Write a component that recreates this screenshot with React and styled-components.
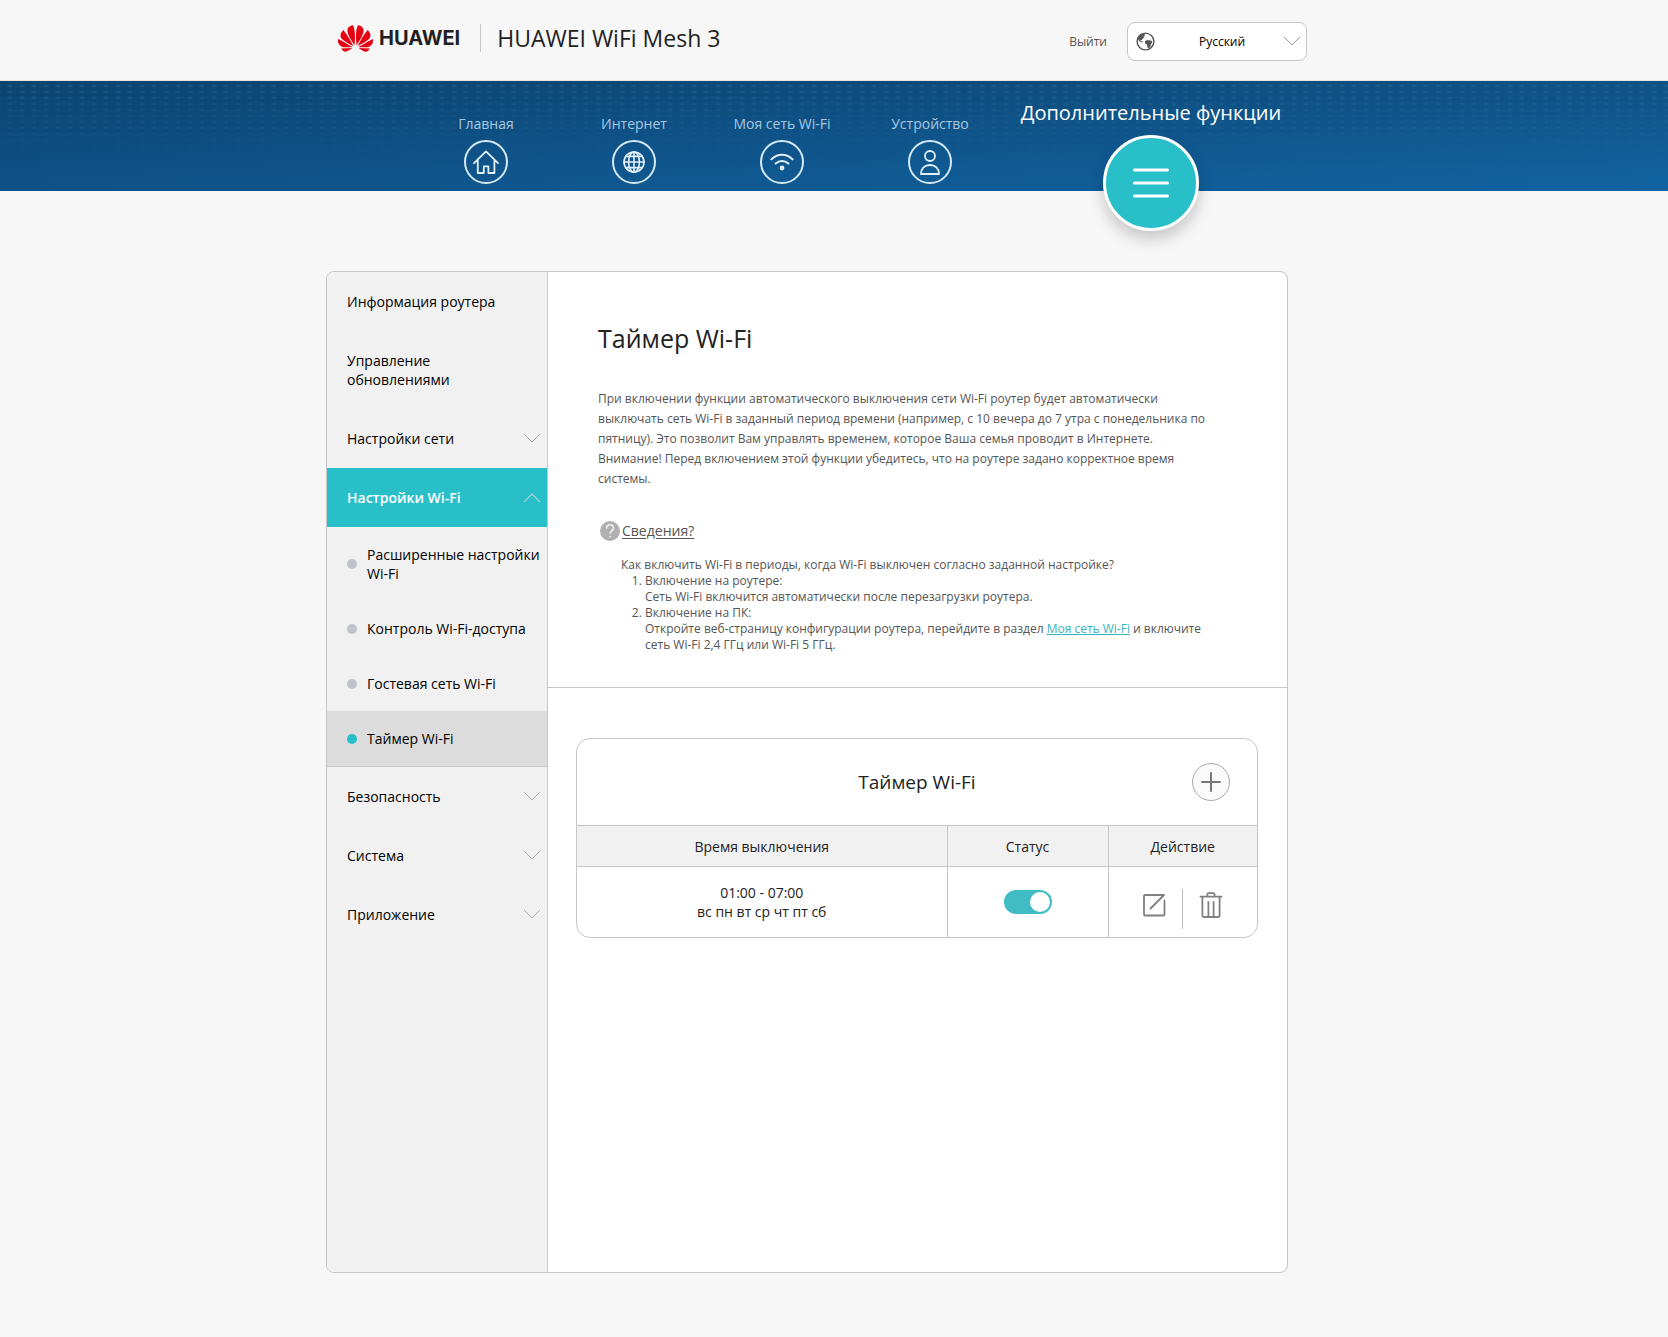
import React, { useState } from "react";
import styled, { createGlobalStyle, css } from "styled-components";
import { SiHuawei } from "react-icons/si";

const teal = "#29bfc8";
const line = "#c6c6c6";

const GlobalStyle = createGlobalStyle`
  *, *::before, *::after { box-sizing: border-box; }
  body {
    margin: 0;
    background: #f7f7f7;
    color: #222;
    font: 14px/19px "Open Sans", "Noto Sans", sans-serif;
  }
  button, select { font: inherit; color: inherit; }
  a { color: inherit; text-decoration: none; }
`;

const Page = styled.div`
  display: flex;
  flex-direction: column;
  min-height: 100vh;
`;

const Wrap = styled.div`
  width: 100%;
  max-width: 1016px;
  margin: 0 auto;
`;

/* Header */
const Header = styled.header`
  border-bottom: 1px solid #e3e3e3;
`;

const HeaderRow = styled(Wrap)`
  display: flex;
  align-items: center;
  height: 80px;
  padding: 0 35px 4px 12px;
`;

const Brand = styled.a`
  display: flex;
  align-items: center;
  gap: 6px;
  height: 28px;
  padding-right: 20px;
  border-right: 1px solid ${line};
  color: #231f20;
  font: 700 20px/28px Inter, sans-serif;

  svg { color: #e60012; }
`;

const Product = styled.span`
  flex: 1;
  padding-left: 16px;
  font-size: 23px;
  line-height: 32px;
`;

const Tools = styled.div`
  display: flex;
  align-items: center;
  gap: 20px;
  padding-top: 6px;
`;

const Logout = styled.a`
  color: #555;
  font-size: 12px;
`;

const Language = styled.label`
  position: relative;
  width: 180px;
  color: #555;

  svg { position: absolute; top: 10px; left: 9px; pointer-events: none; }
  svg + svg { top: 15px; left: auto; right: 7px; color: #999; }
`;

const LanguageSelect = styled.select`
  display: block;
  width: 100%;
  height: 39px;
  padding: 0 18px 0 28px;
  border: 1px solid ${line};
  border-radius: 8px;
  background: #fff;
  color: #000;
  font-size: 12px;
  text-align: center;
  text-align-last: center;
  appearance: none;
`;

/* Main navigation */
const Banner = styled.nav`
  position: relative;
  height: 110px;
  background:
    linear-gradient(to bottom, rgba(0, 0, 0, 0.17), rgba(0, 0, 0, 0) 90%),
    linear-gradient(to right, #0e5186, #1162a0);

  &::before {
    content: "";
    position: absolute;
    inset: 2px 0 30px;
    background: radial-gradient(ellipse 4px 2px, rgba(120, 180, 200, 0.18), transparent) 4px 0 / 12px 6px;
    mask-image: linear-gradient(to bottom, #000, transparent);
  }
`;

const NavRow = styled(Wrap)`
  position: relative;
  display: flex;
  align-items: flex-start;
  padding: 0 44px 0 86px;
`;

const NavItem = styled.a`
  display: flex;
  flex-direction: column;
  align-items: center;
  gap: 6px;
  width: 148px;
  padding-top: 33px;
  color: #a6c8e0;
  line-height: 20px;

  ${(p) => p.$active && css`
    flex: 1;
    gap: 8px;
    padding-top: 18px;
    color: #fff;
    font-size: 20px;
    font-weight: 500;
    line-height: 28px;
  `}
`;

const NavCircle = styled.span`
  display: flex;
  align-items: center;
  justify-content: center;
  width: 44px;
  height: 44px;
  border: 2px solid #d5e9f6;
  border-radius: 50%;
  color: #e2f1fb;

  ${(p) => p.$active && css`
    width: 96px;
    height: 96px;
    border: 3px solid #fff;
    background: ${teal};
    color: #fff;
    box-shadow: 0 8px 16px rgba(0, 0, 0, 0.2);
  `}
`;

/* Body */
const Main = styled(Wrap)`
  flex: 1;
  display: flex;
  padding: 80px 54px 64px 0;
`;

const Panel = styled.div`
  flex: 1;
  display: flex;
  border: 1px solid ${line};
  border-radius: 8px;
  background: #fff;
  overflow: hidden;
`;

const Sidebar = styled.aside`
  flex: none;
  width: 221px;
  border-right: 1px solid ${line};
  background: #f1f1f1;
  color: #000;
`;

const MenuItem = styled.a`
  display: flex;
  align-items: center;
  justify-content: space-between;
  padding: 20px 7px 20px 20px;

  svg { flex: none; color: #aaa; }

  ${(p) => p.$open && css`
    background: ${teal};
    color: #fff;
    font-weight: 600;
    svg { color: #fff; transform: rotate(180deg); }
  `}
`;

const MenuText = styled.span`
  max-width: 160px;
`;

const SubMenu = styled.div`
  border-bottom: 1px solid ${line};
`;

const SubItem = styled.a`
  display: flex;
  align-items: center;
  gap: 10px;
  padding: 18px 4px 18px 20px;
  background: ${(p) => (p.$active ? "#dcdcdc" : "transparent")};

  &::before {
    content: "";
    flex: none;
    width: 10px;
    height: 10px;
    border-radius: 50%;
    background: ${(p) => (p.$active ? teal : "#bfc3cb")};
  }
`;

const Content = styled.main`
  flex: 1;
  min-width: 0;
`;

const Intro = styled.section`
  padding: 48px 72px 34px 50px;
  border-bottom: 1px solid ${line};
  color: #555;
  font-size: 12px;
`;

const Title = styled.h1`
  margin: 0;
  color: #222;
  font-size: 25px;
  font-weight: 400;
  line-height: 36px;
`;

const Lead = styled.p`
  margin: 33px 0 32px;
  line-height: 20px;
`;

const HelpButton = styled.button`
  display: flex;
  align-items: center;
  gap: 2px;
  margin: 0 0 16px;
  padding: 0 2px;
  border: 0;
  background: none;
  font-size: 14px;
  line-height: 20px;
  text-decoration: underline;
  text-underline-offset: 2px;
`;

const HelpText = styled.div`
  padding-left: 23px;
  line-height: 16px;

  ol { margin: 0; padding-left: 24px; }
  a { color: #38b4bc; text-decoration: underline; }
`;

const Card = styled.section`
  margin: 50px 29px 50px 28px;
  border: 1px solid ${line};
  border-radius: 14px;
  overflow: hidden;
`;

const CardHead = styled.div`
  display: grid;
  grid-template-columns: 38px 1fr 38px;
  align-items: center;
  height: 86px;
  padding: 0 27px;
`;

const CardTitle = styled.h2`
  grid-column: 2;
  margin: 0;
  font-size: 19px;
  font-weight: 400;
  line-height: 28px;
  text-align: center;
`;

const AddButton = styled.button`
  display: flex;
  align-items: center;
  justify-content: center;
  width: 38px;
  height: 38px;
  padding: 0;
  border: 1px solid #aaa;
  border-radius: 50%;
  background: #fafafa;
  color: #777;
`;

const Table = styled.table`
  width: 100%;
  border-collapse: collapse;
  table-layout: fixed;
  text-align: center;

  th, td { padding: 0; }
  th + th, td + td { border-left: 1px solid ${line}; }
  th {
    height: 41px;
    border-top: 1px solid ${line};
    border-bottom: 1px solid ${line};
    background: #f1f1f1;
    font-weight: 400;
  }
  td { height: 70px; }
  th:nth-child(2) { width: 161px; }
  th:nth-child(3) { width: 149px; }
`;

const Switch = styled.input`
  display: block;
  width: 48px;
  height: 24px;
  margin: 0 auto;
  padding: 2px;
  border-radius: 12px;
  background: #bfc3cb;
  appearance: none;

  &::before {
    content: "";
    display: block;
    width: 20px;
    height: 20px;
    border-radius: 50%;
    background: #fff;
  }
  &:checked { background: #41bcc4; }
  &:checked::before { margin-left: auto; }
`;

const Actions = styled.div`
  display: flex;
  justify-content: center;
  padding-top: 14px;
`;

const ActionButton = styled.button`
  display: flex;
  align-items: center;
  justify-content: center;
  width: 56px;
  height: 32px;
  padding: 0;
  border: 0;
  background: none;
  color: #808080;
`;

const ActionRule = styled.span`
  width: 1px;
  height: 40px;
  background: #bbb;
`;

/* Icons */
const Icon = ({ w, h = w, box = `0 0 ${w} ${h}`, sw = 2, children }) => (
  <svg width={w} height={h} viewBox={box} fill="none" stroke="currentColor" strokeWidth={sw} strokeLinecap="round" strokeLinejoin="round" aria-hidden="true">
    {children}
  </svg>
);

const Chevron = () => (
  <Icon w={16} h={9} sw={1}><path d="M.5 .5 8 8 15.5 .5" /></Icon>
);

const Earth = () => (
  <Icon w={19} sw={1.4}>
    <circle cx="9.5" cy="9.5" r="8.4" />
    <path stroke="none" fill="currentColor" d="M1.8 6.8C3 3.6 5 1.8 8.6 1.2L9 3.2 7.4 4.2 8.8 5 6.8 6.4 5.9 7.9 4.6 7.8 4.6 8.8 7 9.8 6.4 10.6 3.6 9.6Z" />
    <path stroke="none" fill="currentColor" d="M9 9.2 11.2 8 15.6 8.7 16.3 10.4 14.9 12.2 14.6 14.6 12.4 16.8 11.3 15 11.1 12.8 9 11.4Z" />
  </Icon>
);

const Home = () => (
  <Icon w={26} h={24} sw={1.8}>
    <path d="M1 13.2 13 1.4 25 13.2M4.8 10.2V23H10.8V16.4H15.4V23H21.4V10.2" />
  </Icon>
);

const Globe = () => (
  <Icon w={22} sw={1.6}>
    <circle cx="11" cy="11" r="10" />
    <path d="M11 1V21M1 11H21M2.8 5.4H19.2M2.8 16.6H19.2" />
    <ellipse cx="11" cy="11" rx="5.4" ry="10" />
  </Icon>
);

const Wifi = () => (
  <Icon w={24} h={18} sw={2}>
    <path d="M1.4 6.4C7.6 .2 16.4 .2 22.6 6.4M5.6 10.6C9.4 7 14.6 7 18.4 10.6" />
    <circle cx="12" cy="15" r="2.4" fill="currentColor" stroke="none" />
  </Icon>
);

const Person = () => (
  <Icon w={20} h={25} sw={1.8}>
    <circle cx="10" cy="6" r="5" />
    <path d="M1 24C1 18.6 4.6 15 10 15S19 18.6 19 24Z" />
  </Icon>
);

const Bars = () => (
  <Icon w={36} h={30} sw={3}><path d="M1.5 2H34.5M1.5 15H34.5M1.5 28H34.5" /></Icon>
);

const Question = () => (
  <Icon w={20} sw={1.3}>
    <circle cx="10" cy="10" r="10" fill="#b0b0b0" stroke="none" />
    <path stroke="#fff" d="M6.6 7.2C6.6 5 8 3.8 10 3.8S13.6 5 13.6 7C13.6 9.4 10.2 9.8 10.2 12.4M10.2 15.4V15.8" />
  </Icon>
);

const Plus = () => (
  <Icon w={20} sw={2}><path d="M10 1V19M1 10H19" /></Icon>
);

const Edit = () => (
  <Icon w={24} sw={1.8}>
    <path d="M22 2H3Q2 2 2 3V21.5Q2 22.5 3 22.5H21.5Q22.5 22.5 22.5 21.5V7.5M22 2 8.5 15.5" />
  </Icon>
);

const Trash = () => (
  <Icon w={24} h={26} sw={1.8}>
    <path d="M1.4 4.6H22.6M3.4 5V23.6Q3.4 25 4.8 25H19.2Q20.6 25 20.6 23.6V5M8.4 4V2.4Q8.4 1.2 9.6 1.2H14.4Q15.6 1.2 15.6 2.4V4M9.4 10V24M14.6 10V24" />
  </Icon>
);

const navItems = [
  ["Главная", Home],
  ["Интернет", Globe],
  ["Моя сеть Wi-Fi", Wifi],
  ["Устройство", Person],
  ["Дополнительные функции", Bars],
];

const menu = [
  { text: "Информация роутера" },
  { text: "Управление обновлениями" },
  { text: "Настройки сети", group: true },
  {
    text: "Настройки Wi-Fi",
    group: true,
    items: ["Расширенные настройки Wi-Fi", "Контроль Wi-Fi-доступа", "Гостевая сеть Wi-Fi", "Таймер Wi-Fi"],
  },
  { text: "Безопасность", group: true },
  { text: "Система", group: true },
  { text: "Приложение", group: true },
];

export default function App() {
  const [enabled, setEnabled] = useState(true);
  const [help, setHelp] = useState(true);

  return (
    <Page>
      <GlobalStyle />
      <Header>
        <HeaderRow>
          <Brand href="#"><SiHuawei size={35} aria-hidden="true" />HUAWEI</Brand>
          <Product>HUAWEI WiFi Mesh 3</Product>
          <Tools>
            <Logout href="#">Выйти</Logout>
            <Language>
              <LanguageSelect aria-label="Язык"><option>Русский</option></LanguageSelect>
              <Earth />
              <Chevron />
            </Language>
          </Tools>
        </HeaderRow>
      </Header>

      <Banner>
        <NavRow>
          {navItems.map(([text, Glyph], i) => (
            <NavItem href="#" key={text} $active={i === 4}>
              {text}
              <NavCircle $active={i === 4}><Glyph /></NavCircle>
            </NavItem>
          ))}
        </NavRow>
      </Banner>

      <Main>
        <Panel>
          <Sidebar>
            {menu.map(({ text, group, items }) => (
              <React.Fragment key={text}>
                <MenuItem href="#" $open={!!items}>
                  <MenuText>{text}</MenuText>
                  {group && <Chevron />}
                </MenuItem>
                {items && (
                  <SubMenu>
                    {items.map((item, i) => (
                      <SubItem href="#" key={item} $active={i === 3}>{item}</SubItem>
                    ))}
                  </SubMenu>
                )}
              </React.Fragment>
            ))}
          </Sidebar>

          <Content>
            <Intro>
              <Title>Таймер Wi-Fi</Title>
              <Lead>
                При включении функции автоматического выключения сети Wi-Fi роутер будет автоматически
                выключать сеть Wi-Fi в заданный период времени (например, с 10 вечера до 7 утра с понедельника по
                пятницу). Это позволит Вам управлять временем, которое Ваша семья проводит в Интернете.
                <br />
                Внимание! Перед включением этой функции убедитесь, что на роутере задано корректное время системы.
              </Lead>
              <HelpButton type="button" aria-expanded={help} onClick={() => setHelp(!help)}>
                <Question />
                Сведения?
              </HelpButton>
              {help && (
                <HelpText>
                  Как включить Wi-Fi в периоды, когда Wi-Fi выключен согласно заданной настройке?
                  <ol>
                    <li>Включение на роутере:<br />Сеть Wi-Fi включится автоматически после перезагрузки роутера.</li>
                    <li>
                      Включение на ПК:<br />
                      Откройте веб-страницу конфигурации роутера, перейдите в раздел <a href="#">Моя сеть Wi-Fi</a> и
                      включите сеть Wi-Fi 2,4 ГГц или Wi-Fi 5 ГГц.
                    </li>
                  </ol>
                </HelpText>
              )}
            </Intro>

            <Card>
              <CardHead>
                <CardTitle>Таймер Wi-Fi</CardTitle>
                <AddButton type="button" aria-label="Добавить"><Plus /></AddButton>
              </CardHead>
              <Table>
                <thead>
                  <tr><th>Время выключения</th><th>Статус</th><th>Действие</th></tr>
                </thead>
                <tbody>
                  <tr>
                    <td>01:00 - 07:00<br />вс пн вт ср чт пт сб</td>
                    <td>
                      <Switch type="checkbox" role="switch" aria-label="Статус" checked={enabled} onChange={() => setEnabled(!enabled)} />
                    </td>
                    <td>
                      <Actions>
                        <ActionButton type="button" aria-label="Изменить"><Edit /></ActionButton>
                        <ActionRule />
                        <ActionButton type="button" aria-label="Удалить"><Trash /></ActionButton>
                      </Actions>
                    </td>
                  </tr>
                </tbody>
              </Table>
            </Card>
          </Content>
        </Panel>
      </Main>
    </Page>
  );
}
